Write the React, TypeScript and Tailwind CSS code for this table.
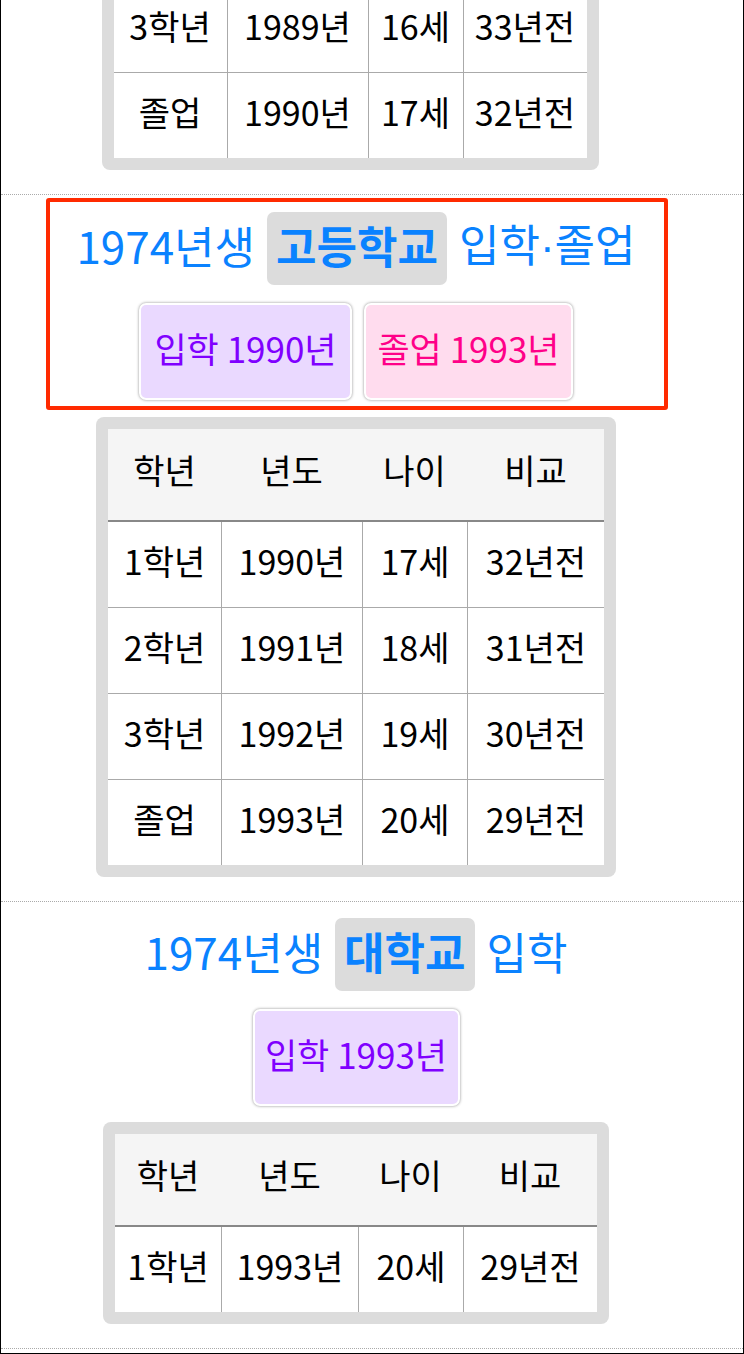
import React from "react";

const FONT = { fontFamily: '"Noto Sans CJK KR", "Noto Sans", sans-serif' };

type TableProps = {
  widths: string[];
  header: boolean;
  rows: string[][];
  className?: string;
};

function GradeTable({ widths, header, rows, className }: TableProps) {
  return (
    <div className={"rounded-[8px] bg-[#dcdcdc] p-[12px] " + (className ?? "")}>
      <div className="bg-white">
        {header && (
          <div className="flex h-[93px] border-b-2 border-[#888888] bg-[#f5f5f5]">
            {["학년", "년도", "나이", "비교"].map((h, i) => (
              <div
                key={h}
                className={"flex items-center justify-center pb-[9px] text-[34px] leading-none text-black " + widths[i]}
              >
                {h}
              </div>
            ))}
          </div>
        )}
        {rows.map((r, ri) => (
          <div
            key={ri}
            className={
              "flex " + (ri === 0 ? "h-[85px]" : "h-[86px] border-t border-[#aaaaaa]")
            }
          >
            {r.map((c, ci) => (
              <div
                key={ci}
                className={
                  "flex items-center justify-center pb-[7px] text-[34px] leading-none text-black " +
                  widths[ci] +
                  (ci > 0 ? " border-l border-[#aaaaaa]" : "")
                }
              >
                {c}
              </div>
            ))}
          </div>
        ))}
      </div>
    </div>
  );
}

function Title({ pre, mid, post }: { pre: string; mid: string; post: React.ReactNode }) {
  return (
    <div className="flex h-[73px] items-center justify-center gap-[12px] text-[44px] leading-none text-[#0a82ff]">
      <span className="pb-[8px]">{pre}</span>
      <span className="flex h-[73px] items-center rounded-[7px] bg-[#dcdcdc] px-[9px] pb-[8px] font-bold">{mid}</span>
      <span className="pb-[8px]">{post}</span>
    </div>
  );
}

function Chip({ text, kind, w }: { text: string; kind: "in" | "out"; w: string }) {
  const cls =
    kind === "in"
      ? "bg-[#ead9ff] text-[#8000ff]"
      : "bg-[#ffdcee] text-[#ff0088]";
  return (
    <div
      className={
        "flex h-[97px] items-center justify-center rounded-[7px] border-2 border-white pb-[8px] text-[35px] leading-none shadow-[0_0_3px_rgba(0,0,0,0.45)] " +
        cls +
        " " +
        w
      }
    >
      {text}
    </div>
  );
}

export default function App() {
  return (
    <div
      className="h-[1354px] w-[744px] overflow-hidden border-x border-b border-black bg-white"
      style={FONT}
    >
      {/* Section A (scrolled, partially visible) */}
      <section className="border-b border-dotted border-[#aaaaaa] pb-[24px]">
        <div className="flex justify-center pr-[44px]">
          <GradeTable
            className="-mt-[25px]"
            widths={["w-[113px]", "w-[141px]", "w-[95px]", "w-[124px]"]}
            header={false}
            rows={[
              ["3학년", "1989년", "16세", "33년전"],
              ["졸업", "1990년", "17세", "32년전"],
            ]}
          />
        </div>
      </section>

      {/* Section B: 고등학교 */}
      <section className="relative border-b border-dotted border-[#aaaaaa] pt-[17px] pb-[24px]">
        <div className="flex flex-col items-center pr-[32px]">
          <Title
            pre="1974년생"
            mid="고등학교"
            post={
              <>
                입학<span className="font-['Liberation_Sans',sans-serif]">·</span>졸업
              </>
            }
          />
          <div className="mt-[18px] flex gap-[12px]">
            <Chip text="입학 1990년" kind="in" w="w-[213px]" />
            <Chip text="졸업 1993년" kind="out" w="w-[209px]" />
          </div>
          <GradeTable
            className="mt-[17px]"
            widths={["w-[113px]", "w-[141px]", "w-[105px]", "w-[137px]"]}
            header={true}
            rows={[
              ["1학년", "1990년", "17세", "32년전"],
              ["2학년", "1991년", "18세", "31년전"],
              ["3학년", "1992년", "19세", "30년전"],
              ["졸업", "1993년", "20세", "29년전"],
            ]}
          />
        </div>
        <div className="pointer-events-none absolute left-[45px] top-[3px] h-[212px] w-[622px] rounded-[3px] border-4 border-[#ff2a00]" />
      </section>

      {/* Section C: 대학교 */}
      <section className="border-b border-dotted border-[#aaaaaa] pt-[16px] pb-[24px]">
        <div className="flex flex-col items-center pr-[32px]">
          <Title pre="1974년생" mid="대학교" post="입학" />
          <div className="mt-[18px] flex">
            <Chip text="입학 1993년" kind="in" w="w-[207px]" />
          </div>
          <GradeTable
            className="mt-[16px]"
            widths={["w-[106px]", "w-[137px]", "w-[105px]", "w-[134px]"]}
            header={true}
            rows={[["1학년", "1993년", "20세", "29년전"]]}
          />
        </div>
      </section>
    </div>
  );
}
